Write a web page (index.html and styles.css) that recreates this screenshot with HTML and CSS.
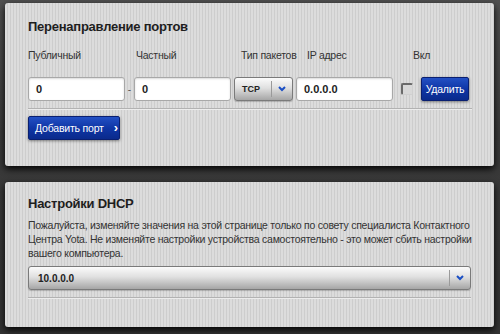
FILE: index.html
```html
<!doctype html>
<html lang="ru">
  <head>
    <meta charset="UTF-8" />
    <title>Перенаправление портов</title>
    <link rel="stylesheet" href="styles.css">
  </head>
  <body>
    <section class="panel ports">
      <h2 class="panel-title">Перенаправление портов</h2>

      <div class="labels">
        <span class="lbl lbl-pub">Публичный</span>
        <span class="lbl lbl-priv">Частный</span>
        <span class="lbl lbl-type">Тип пакетов</span>
        <span class="lbl lbl-ip">IP адрес</span>
        <span class="lbl">Вкл</span>
      </div>

      <div class="port-row">
        <div class="field w-port">0</div>
        <span class="dash">-</span>
        <div class="field w-port">0</div>
        <div class="select w-type">
          <span class="select-text">TCP</span>
          <span class="select-arrow">
            <svg width="8" height="6" viewBox="0 0 8 6"><polyline points="1,1 4,4 7,1" fill="none" stroke="#1b4fc4" stroke-width="2"/></svg>
          </span>
        </div>
        <div class="field w-ip">0.0.0.0</div>
        <span class="check"></span>
        <button class="btn btn-del">Удалить</button>
      </div>

      <div class="rule"></div>

      <button class="btn btn-add">Добавить порт <span class="chev">›</span></button>
    </section>

    <section class="panel dhcp">
      <h2 class="panel-title">Настройки DHCP</h2>
      <p class="note">Пожалуйста, изменяйте значения на этой странице только по совету специалиста Контактного Центра Yota. Не изменяйте настройки устройства самостоятельно - это может сбить настройки вашего компьютера.</p>

      <div class="select wide">
        <span class="select-text">10.0.0.0</span>
        <span class="select-arrow">
          <svg width="8" height="6" viewBox="0 0 8 6"><polyline points="1,1 4,4 7,1" fill="none" stroke="#1b4fc4" stroke-width="2"/></svg>
        </span>
      </div>

      <div class="rule"></div>
    </section>
  </body>
</html>
```

FILE: styles.css
```css
* {
  box-sizing: border-box;
}

body {
  margin: 0;
  padding: 3px 6px 0 5px;
  height: 334px;
  overflow: hidden;
  background: linear-gradient(180deg, #505050 0%, #3a3a3a 40%, #333 100%);
  font-family: "Liberation Sans", Arial, sans-serif;
  color: #333;
}

.panel {
  background: repeating-linear-gradient(90deg, #dcdcdc 0 2px, #cdcdcd 2px 3px);
  border-radius: 3px;
  padding: 0 22px 0 23px;
  box-shadow: 0 3px 7px rgba(0, 0, 0, 0.95);
}

.ports {
  height: 163px;
  padding-top: 15px;
}

.dhcp {
  margin-top: 16px;
  height: 145px;
  padding-top: 13px;
}

.panel-title {
  margin: 0;
  font-size: 13px;
  line-height: 18px;
  font-weight: bold;
  letter-spacing: -0.25px;
  color: #1e1e1e;
}

.labels {
  display: flex;
  margin-top: 12px;
  font-size: 10.5px;
  line-height: 14px;
  letter-spacing: -0.25px;
  color: #333;
}

.lbl-pub { width: 108px; }
.lbl-priv { width: 105px; }
.lbl-type { width: 66px; }
.lbl-ip { width: 106px; }

.port-row {
  display: flex;
  align-items: center;
  margin-top: 15px;
  height: 24px;
}

.field {
  height: 24px;
  background: #fff;
  border: 1px solid #a8a8a8;
  border-radius: 3px;
  box-shadow: inset 0 1px 2px rgba(0, 0, 0, 0.15);
  padding-left: 7px;
  font-size: 11px;
  line-height: 22px;
  font-weight: bold;
  color: #222;
}

.w-port { width: 97px; }
.w-ip { width: 97px; margin-left: 3px; }

.dash {
  width: 9px;
  text-align: center;
  font-size: 10px;
  color: #555;
}

.select {
  display: flex;
  align-items: center;
  height: 24px;
  border: 1px solid #7a7a7a;
  border-radius: 3px;
  background: linear-gradient(180deg, #fbfbfb 0%, #e0e0e0 45%, #a6a6a6 100%);
  box-shadow: 0 1px 1px rgba(0, 0, 0, 0.2);
}

.w-type {
  width: 59px;
  margin-left: 3px;
}

.select-text {
  flex: 1;
  padding-left: 7px;
  font-size: 9px;
  font-weight: bold;
  color: #222;
}

.select-arrow {
  display: flex;
  align-items: center;
  justify-content: center;
  width: 21px;
  height: 16px;
  border-left: 1px solid #9a9a9a;
}

.check {
  width: 12px;
  height: 12px;
  margin-left: 8px;
  border-top: 2px solid #6a6a6a;
  border-left: 2px solid #6a6a6a;
  border-right: 1px solid #cfcfcf;
  border-bottom: 1px solid #cfcfcf;
  border-radius: 2px;
  background: #d8d8d8;
}

.btn {
  font-family: "Liberation Sans", Arial, sans-serif;
  font-size: 10.5px;
  letter-spacing: -0.2px;
  white-space: nowrap;
  color: #fff;
  border: 1px solid #0a1f70;
  border-radius: 2px;
  background: linear-gradient(180deg, #2350c4 0%, #0f36a6 50%, #0a2a8c 100%);
  box-shadow: 0 1px 3px rgba(0, 0, 0, 0.45);
  padding: 0;
}

.btn-del {
  width: 48px;
  height: 24px;
  margin-left: 8px;
}

.rule {
  height: 2px;
  margin-top: 7px;
  border-top: 1px solid #b2b2b2;
  border-bottom: 1px solid #ececec;
}

.btn-add {
  display: flex;
  align-items: center;
  width: 92px;
  height: 24px;
  margin-top: 6px;
  padding-left: 6px;
}

.chev {
  margin-left: 10px;
  font-weight: bold;
  font-size: 13px;
  line-height: 12px;
}

.note {
  margin: 5px 0 0;
  font-size: 10.5px;
  line-height: 14px;
  letter-spacing: -0.25px;
  color: #333;
}

.wide {
  width: 443px;
  margin-top: 6px;
}

.wide .select-text {
  padding-left: 9px;
  font-size: 10px;
}

.wide .select-arrow {
  width: 21px;
}

.dhcp .rule {
  margin-top: 7px;
  width: 443px;
}
```
